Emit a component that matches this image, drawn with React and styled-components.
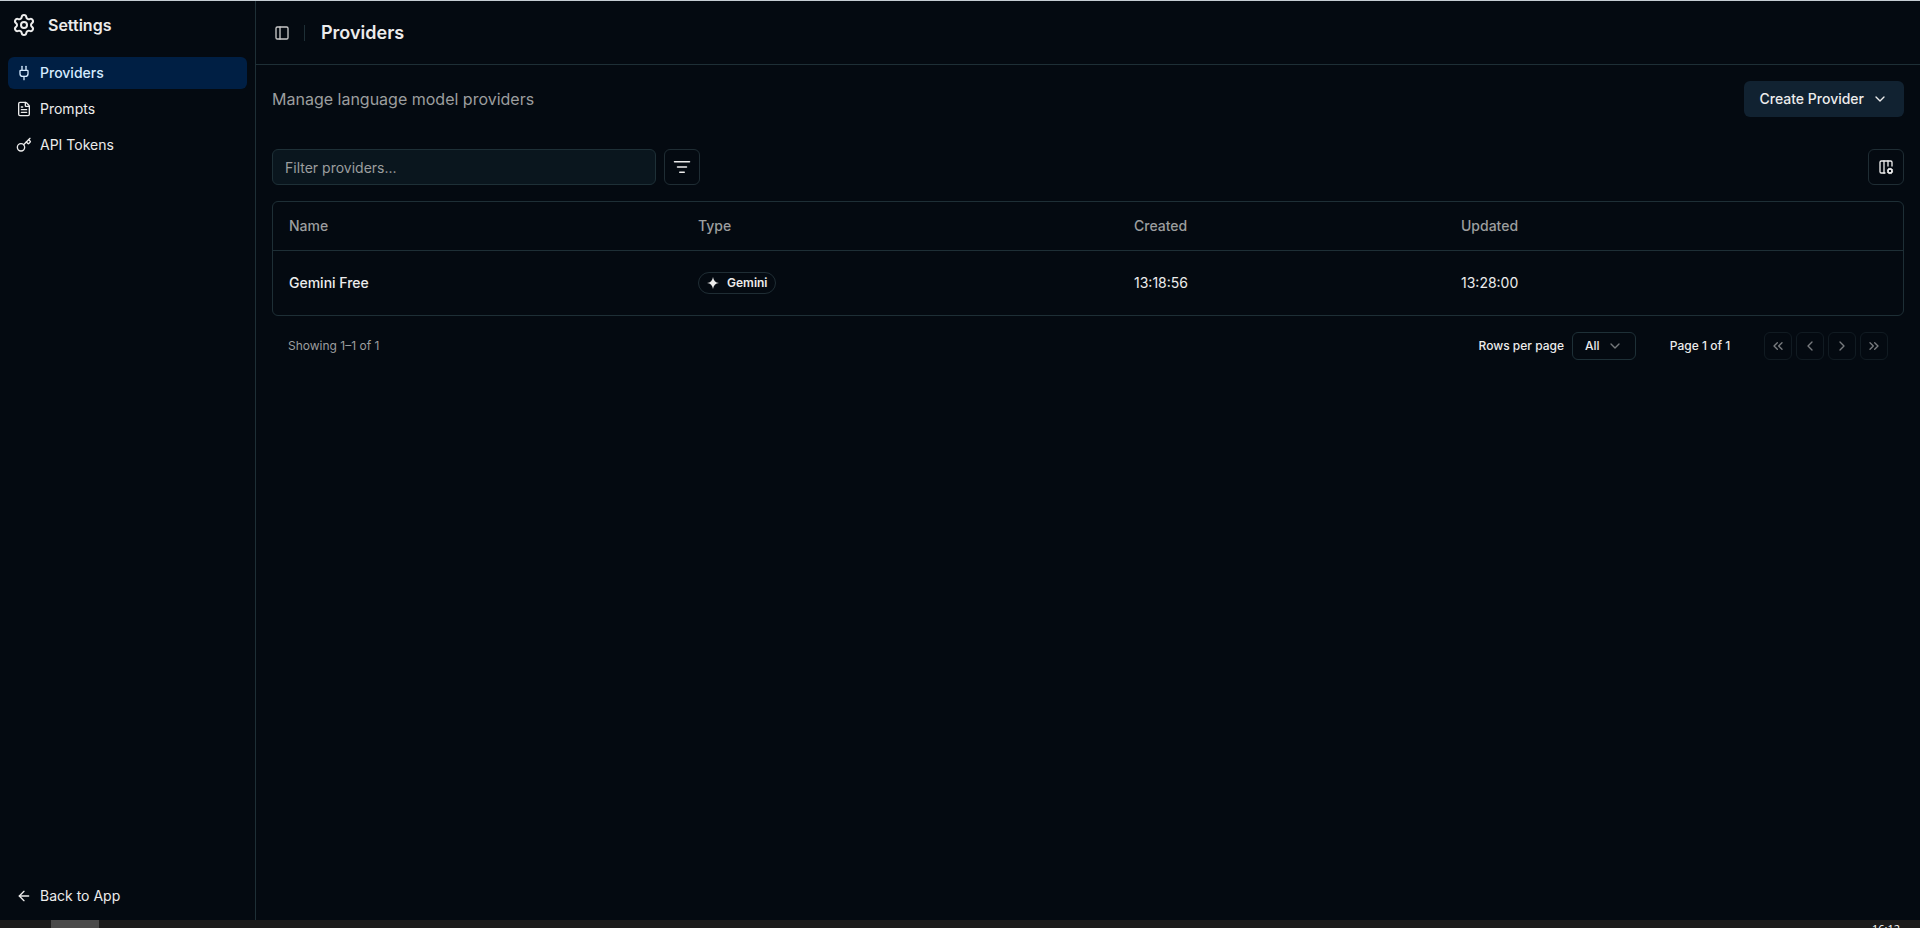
import React, { useState } from "react";
import styled, { createGlobalStyle } from "styled-components";
import {
  Settings,
  Plug,
  FileText,
  Key,
  ArrowLeft,
  PanelLeft,
  ChevronDown,
  ChevronLeft,
  ChevronRight,
  ChevronsLeft,
  ChevronsRight,
  ListFilter,
  Columns3Cog,
} from "lucide-react";

const menu = [
  { title: "Providers", icon: Plug },
  { title: "Prompts", icon: FileText },
  { title: "API Tokens", icon: Key },
];

const providers = [
  { name: "Gemini Free", type: "Gemini", created: "13:18:56", updated: "13:28:00" },
];

const pageButtons = [
  { label: "First page", icon: ChevronsLeft },
  { label: "Previous page", icon: ChevronLeft },
  { label: "Next page", icon: ChevronRight },
  { label: "Last page", icon: ChevronsRight },
];

function App() {
  const [active, setActive] = useState("Providers");
  const [filter, setFilter] = useState("");

  const rows = providers.filter((p) =>
    p.name.toLowerCase().includes(filter.toLowerCase())
  );

  return (
    <Desktop>
      <GlobalStyle />
      <Window>
        <Sidebar>
          <SidebarTitle>
            <Settings size={24} />
            <span>Settings</span>
          </SidebarTitle>
          <Menu>
            {menu.map(({ title, icon: Icon }) => (
              <MenuItem
                key={title}
                $active={active === title}
                onClick={() => setActive(title)}
              >
                <Icon size={16} />
                {title}
              </MenuItem>
            ))}
          </Menu>
          <SidebarFooter>
            <MenuItem>
              <ArrowLeft size={16} />
              Back to App
            </MenuItem>
          </SidebarFooter>
        </Sidebar>
        <Main>
          <Header>
            <SidebarTrigger aria-label="Toggle sidebar">
              <PanelLeft size={16} />
            </SidebarTrigger>
            <Separator />
            <h1>Providers</h1>
          </Header>
          <Content>
            <Intro>
              <p>Manage language model providers</p>
              <CreateButton>
                Create Provider
                <ChevronDown size={16} />
              </CreateButton>
            </Intro>
            <Toolbar>
              <FilterInput
                placeholder="Filter providers..."
                value={filter}
                onChange={(e) => setFilter(e.target.value)}
              />
              <IconButton aria-label="Filters">
                <ListFilter size={18} />
              </IconButton>
              <Spacer />
              <IconButton aria-label="Columns">
                <Columns3Cog size={16} />
              </IconButton>
            </Toolbar>
            <Table>
              <TableHead>
                <span>Name</span>
                <span>Type</span>
                <span>Created</span>
                <span>Updated</span>
              </TableHead>
              {rows.map((row) => (
                <TableRow key={row.name}>
                  <Name>{row.name}</Name>
                  <div>
                    <Badge>
                      <GeminiIcon />
                      {row.type}
                    </Badge>
                  </div>
                  <span>{row.created}</span>
                  <span>{row.updated}</span>
                </TableRow>
              ))}
            </Table>
            <Pagination>
              <Showing>Showing 1–1 of 1</Showing>
              <span>Rows per page</span>
              <PageSize>
                All
                <ChevronDown size={16} />
              </PageSize>
              <PageCount>Page 1 of 1</PageCount>
              <PageButtons>
                {pageButtons.map(({ label, icon: Icon }) => (
                  <PageButton key={label} aria-label={label} disabled>
                    <Icon size={16} />
                  </PageButton>
                ))}
              </PageButtons>
            </Pagination>
          </Content>
        </Main>
      </Window>
      <Taskbar>
        <TaskbarItem />
        <Clock>16:12</Clock>
      </Taskbar>
    </Desktop>
  );
}

const GeminiIcon = () => (
  <svg width="12" height="12" viewBox="0 0 24 24" fill="currentColor">
    <path d="M12 0C12.8 7 17 11.2 24 12C17 12.8 12.8 17 12 24C11.2 17 7 12.8 0 12C7 11.2 11.2 7 12 0Z" />
  </svg>
);

const GlobalStyle = createGlobalStyle`
  * {
    box-sizing: border-box;
  }
  body {
    margin: 0;
    overflow: hidden;
    background-color: #040a11;
    color: #ececec;
    font-family: Inter, "Liberation Sans", sans-serif;
    font-size: 14px;
    line-height: 20px;
  }
  button,
  input {
    font: inherit;
    color: inherit;
    margin: 0;
  }
  svg {
    flex-shrink: 0;
  }
`;

const Desktop = styled.div`
  height: 100vh;
  display: flex;
  flex-direction: column;
`;

const Window = styled.div`
  flex: 1;
  min-height: 0;
  display: flex;
  border-top: 1px solid #c5cdd3;
`;

const Sidebar = styled.aside`
  width: 256px;
  display: flex;
  flex-direction: column;
  border-right: 1px solid #1e2f36;
`;

const SidebarTitle = styled.div`
  height: 48px;
  padding: 0 12px;
  display: flex;
  align-items: center;
  gap: 12px;
  font-size: 16px;
  font-weight: 600;
`;

const Menu = styled.nav`
  padding: 8px;
  display: flex;
  flex-direction: column;
  gap: 4px;
`;

const MenuItem = styled.button`
  width: 100%;
  height: 32px;
  padding: 0 8px;
  display: flex;
  align-items: center;
  gap: 8px;
  border: none;
  border-radius: 6px;
  cursor: pointer;
  font-weight: ${(props) => (props.$active ? 500 : 400)};
  background-color: ${(props) => (props.$active ? "#001f44" : "transparent")};
  color: ${(props) => (props.$active ? "#d5ebff" : "#ececec")};
`;

const SidebarFooter = styled.div`
  margin-top: auto;
  padding: 8px;
`;

const Main = styled.main`
  flex: 1;
  min-width: 0;
`;

const Header = styled.header`
  height: 64px;
  padding: 0 12px;
  display: flex;
  align-items: center;
  border-bottom: 1px solid #1e2f36;
  h1 {
    margin: 0 0 0 16px;
    font-size: 18px;
    line-height: 28px;
    font-weight: 600;
  }
`;

const SidebarTrigger = styled.button`
  width: 28px;
  height: 28px;
  padding: 0;
  display: flex;
  align-items: center;
  justify-content: center;
  border: none;
  background: none;
  color: #c9c9c9;
`;

const Separator = styled.div`
  width: 1px;
  height: 16px;
  margin-left: 8px;
  background-color: #1e2f36;
`;

const Content = styled.div`
  padding: 16px;
  display: flex;
  flex-direction: column;
`;

const Intro = styled.div`
  height: 36px;
  display: flex;
  align-items: center;
  justify-content: space-between;
  margin-bottom: 32px;
  p {
    margin: 0;
    font-size: 16px;
    line-height: 24px;
    color: #9c9e9f;
  }
`;

const CreateButton = styled.button`
  height: 36px;
  padding: 0 16px;
  display: flex;
  align-items: center;
  gap: 8px;
  border: none;
  border-radius: 6px;
  background-color: #112231;
  font-weight: 500;
  white-space: nowrap;
`;

const Toolbar = styled.div`
  display: flex;
  gap: 8px;
  margin-bottom: 16px;
`;

const Spacer = styled.div`
  flex: 1;
`;

const FilterInput = styled.input`
  width: 384px;
  height: 36px;
  padding: 0 12px;
  border: 1px solid #1e3037;
  border-radius: 6px;
  background-color: #0a161e;
  &::placeholder {
    color: #9c9e9f;
    opacity: 1;
  }
`;

const IconButton = styled.button`
  width: 36px;
  height: 36px;
  padding: 0;
  display: flex;
  align-items: center;
  justify-content: center;
  border: 1px solid #1f2d34;
  border-radius: 6px;
  background: none;
`;

const Table = styled.div`
  border: 1px solid #1e2f36;
  border-radius: 6px;
`;

const Row = styled.div`
  padding: 0 16px;
  display: grid;
  grid-template-columns: 409px 436px 327px 1fr;
  align-items: center;
`;

const TableHead = styled(Row)`
  height: 49px;
  border-bottom: 1px solid #1e2f36;
  font-weight: 500;
  color: #9c9e9f;
`;

const TableRow = styled(Row)`
  height: 64px;
`;

const Name = styled.span`
  font-weight: 500;
`;

const Badge = styled.span`
  height: 22px;
  padding: 0 7.5px 0 8px;
  display: inline-flex;
  align-items: center;
  gap: 8px;
  border: 1px solid #1f2d34;
  border-radius: 11px;
  font-size: 12px;
  line-height: 16px;
  font-weight: 600;
  vertical-align: middle;
`;

const Pagination = styled.div`
  height: 28px;
  margin-top: 16px;
  padding: 0 16px;
  display: flex;
  align-items: center;
  font-size: 12px;
  line-height: 16px;
  font-weight: 500;
`;

const Showing = styled.span`
  margin-right: auto;
  font-weight: 400;
  color: #9c9e9f;
`;

const PageSize = styled.button`
  width: 64px;
  height: 28px;
  margin-left: 8px;
  padding: 0 12px;
  display: flex;
  align-items: center;
  justify-content: space-between;
  border: 1px solid #1e3037;
  border-radius: 6px;
  background: none;
  svg {
    color: #75797c;
  }
`;

const PageCount = styled.span`
  width: 128px;
  text-align: center;
`;

const PageButtons = styled.div`
  display: flex;
  gap: 4px;
`;

const PageButton = styled(IconButton)`
  width: 28px;
  height: 28px;
  &:disabled {
    opacity: 0.5;
  }
`;

const Taskbar = styled.footer`
  height: 8px;
  overflow: hidden;
  display: flex;
  justify-content: space-between;
  padding: 0 20px 0 51px;
  background-color: #1c1c1c;
`;

const TaskbarItem = styled.div`
  width: 48px;
  background-color: #4a4a4a;
`;

const Clock = styled.span`
  padding-top: 1px;
  font-family: "Open Sans", sans-serif;
  font-size: 11px;
  line-height: 16px;
  color: #fff;
`;

export default App;
